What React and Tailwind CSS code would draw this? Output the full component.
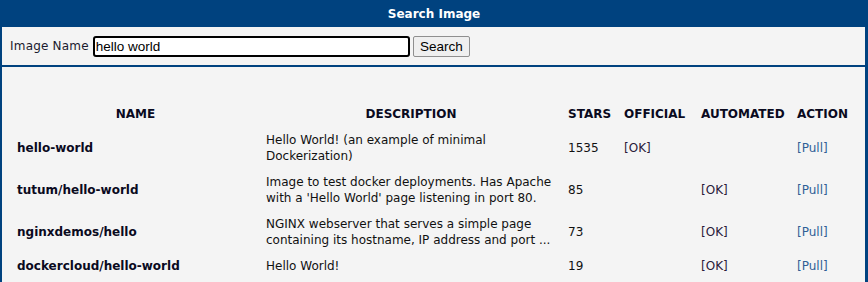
import React, { useState } from 'react';

const rows = [
    {
        name: 'hello-world',
        description: 'Hello World! (an example of minimal Dockerization)',
        stars: '1535',
        official: true,
        automated: false,
    },
    {
        name: 'tutum/hello-world',
        description: "Image to test docker deployments. Has Apache with a 'Hello World' page listening in port 80.",
        stars: '85',
        official: false,
        automated: true,
    },
    {
        name: 'nginxdemos/hello',
        description: 'NGINX webserver that serves a simple page containing its hostname, IP address and port ...',
        stars: '73',
        official: false,
        automated: true,
    },
    {
        name: 'dockercloud/hello-world',
        description: 'Hello World!',
        stars: '19',
        official: false,
        automated: true,
    },
];

const App = () => {
    const [query, setQuery] = useState('hello world');

    return (
        <div className="w-[868px] h-[282px] bg-[#f4f4f4] font-['DejaVu_Sans',Verdana,sans-serif] overflow-hidden flex flex-col">
            <div className="h-[27px] bg-[#00427f] flex items-center justify-center text-white text-[12px] font-bold">
                Search Image
            </div>

            <div className="flex-1 flex flex-col border-l-2 border-r-[3px] border-[#00427f]">
                <div className="h-[38px] flex items-center pl-2 text-[12px] text-[#1a1a2e]">
                    <span className="tracking-[0.2px]">Image Name</span>
                    <input
                        type="text"
                        value={query}
                        onChange={(e) => setQuery(e.target.value)}
                        className="ml-[4px] w-[317px] h-[21px] bg-white border-2 border-black rounded-[3px] px-[1px] text-[13.5px] font-['Liberation_Sans',Arial,sans-serif] text-black outline-none"
                    />
                    <button className="ml-[3px] h-[21px] w-[57px] bg-[#efefef] border border-[#8f8f8f] rounded-[2px] text-[13.5px] font-['Liberation_Sans',Arial,sans-serif] text-black">
                        Search
                    </button>
                </div>
                <div className="h-[2px] bg-[#00427f]" />

                <table className="table-fixed border-collapse ml-[9px] mt-[34px] w-[846px] text-[12px] leading-[16px] text-[#111]">
                    <colgroup>
                        <col className="w-[249px]" />
                        <col className="w-[302px]" />
                        <col className="w-[56px]" />
                        <col className="w-[77px]" />
                        <col className="w-[96px]" />
                        <col className="w-[66px]" />
                    </colgroup>
                    <thead>
                        <tr className="font-bold text-[#0a0a1e]">
                            <th className="px-[6px] py-[5px] text-center">NAME</th>
                            <th className="px-[6px] py-[5px] text-center">DESCRIPTION</th>
                            <th className="px-[6px] py-[5px] text-left">STARS</th>
                            <th className="px-[6px] py-[5px] text-left">OFFICIAL</th>
                            <th className="px-[6px] py-[5px] text-left">AUTOMATED</th>
                            <th className="px-[6px] py-[5px] text-left">ACTION</th>
                        </tr>
                    </thead>
                    <tbody>
                        {rows.map((row) => (
                            <tr key={row.name}>
                                <td className="px-[6px] py-[5px] font-bold text-[#0a0a1e]">{row.name}</td>
                                <td className="px-[6px] py-[5px]">{row.description}</td>
                                <td className="px-[6px] py-[5px]">{row.stars}</td>
                                <td className="px-[6px] py-[5px] text-[#2a1a3a]">{row.official ? '[OK]' : ''}</td>
                                <td className="px-[6px] py-[5px] text-[#2a1a3a]">{row.automated ? '[OK]' : ''}</td>
                                <td className="px-[6px] py-[5px]">
                                    <a href="#" className="text-[#2f5f96]">[Pull]</a>
                                </td>
                            </tr>
                        ))}
                    </tbody>
                </table>
            </div>
        </div>
    );
};

export default App;
